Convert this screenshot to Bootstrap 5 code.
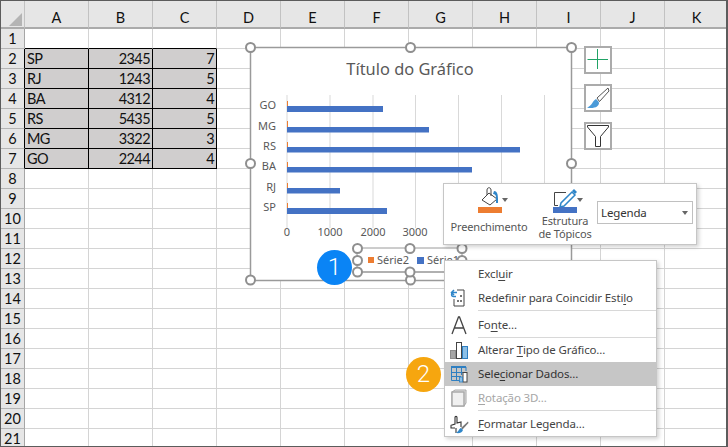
<!DOCTYPE html>
<html lang="pt-BR">
<head>
    <meta charset="UTF-8">
    <title>Selecionar Dados</title>
    <link href="https://cdn.jsdelivr.net/npm/bootstrap@5.3.0/dist/css/bootstrap.min.css" rel="stylesheet">
    <style>
        body { margin: 0; background: #fff; overflow: hidden; }
        .xl-window { position: relative; width: 728px; height: 447px; overflow: hidden; border: 1px solid #5c5c5c; border-right-width: 2px; box-sizing: border-box; }
        .xl-sheet { border-collapse: separate; border-spacing: 0; table-layout: fixed; width: 728px; font: 14.5px/19px Lato, "Liberation Sans", sans-serif; color: #111; }
        .xl-sheet td, .xl-sheet th { box-sizing: border-box; height: 20px; padding: 0 2px; border-right: 1px solid #d4d4d4; border-bottom: 1px solid #d4d4d4; font-weight: 400; overflow: hidden; white-space: nowrap; }
        .xl-sheet col.xl-rowcol { width: 24px; }
        .xl-sheet col.xl-datacol { width: 64px; }
        .xl-sheet thead th { height: 28px; padding: 6px 0 0; background: #e6e6e6; text-align: center; border-right-color: #c2c2c2; border-bottom: 2px solid #ababab; }
        .xl-sheet tbody th { padding: 0; background: #e6e6e6; text-align: center; border-right-color: #a6a6a6; border-bottom-color: #b5b5b5; }
        .xl-sheet td.xl-data { background: #d0cece; border-right-color: #000; border-bottom-color: #000; letter-spacing: -.6px; }
        .xl-sheet td.xl-above { border-bottom-color: #000; }
        .xl-sheet th.xl-beside { border-right-color: #000; }
        .xl-corner { position: absolute; left: 8px; top: 12px; width: 0; height: 0; border-left: 13px solid transparent; border-bottom: 13px solid #b4b4b4; }
        .xl-canvas { position: absolute; left: -1px; top: -1px; width: 728px; height: 447px; }
        .xl-canvas text { font-family: "Noto Sans", "Open Sans", sans-serif; fill: #595959; }
        .xl-sidebtn { position: absolute; left: 583px; width: 28px; height: 28px; padding: 0; background: #fff; border: 2px solid #ababab; border-radius: 0; }
        .xl-sidebtn svg { display: block; }
        .xl-float { position: absolute; background: #fff; border: 1px solid #c6c6c6; box-shadow: 2px 2px 4px rgba(0,0,0,.18); font-family: "Noto Sans", "Open Sans", sans-serif; color: #444; font-size: 11.5px; letter-spacing: -.13px; }
        .xl-mini { left: 442px; top: 182px; width: 254px; height: 62px; font-size: 11px; letter-spacing: -.15px; }
        .xl-minitool { line-height: 13px; text-align: center; color: #555; }
        .xl-combo { position: absolute; left: 153px; top: 17px; width: 96px; height: 23px; border: 1px solid #c0c0c0; padding: 3px 0 0 3px; line-height: 15px; color: #333; font-size: 11.5px; }
        .xl-combo::after { content: ""; position: absolute; right: 4px; top: 9px; border: 3.5px solid transparent; border-top: 4px solid #666; }
        .xl-menu { left: 443px; top: 259px; width: 213px; height: 177px; padding-top: 1px; }
        .xl-item { height: 24px; padding-right: 6px; }
        .xl-item.xl-active { background: #c6c6c6; color: #333; }
        .xl-item.xl-off { color: #a6a6a6; }
        .xl-item u { text-underline-offset: 2px; }
        .xl-icon { flex: 0 0 33px; display: flex; justify-content: center; padding-right: 6px; }
        .xl-sep { height: 2px; margin-left: 33px; position: relative; }
        .xl-sep-wide { height: 3px; }
        .xl-sep-thin { height: 1px; }
        .xl-sep::after { content: ""; position: absolute; left: 0; right: 0; top: 0; border-top: 1px solid #d8d8d8; }
        .xl-step { position: absolute; width: 35px; height: 35px; border-radius: 50%; color: #fff; font: 300 24px/35px Roboto, "Noto Sans", sans-serif; text-align: center; }
        .xl-step-1 { left: 316px; top: 249px; background: #0a84f5; }
        .xl-step-2 { left: 405px; top: 356px; background: #f6a60f; }
    </style>
</head>
<body>
<div class="xl-window">
    <table class="xl-sheet">
        <colgroup id="sheet-cols"></colgroup>
        <thead><tr id="sheet-head"></tr></thead>
        <tbody id="sheet-body"></tbody>
    </table>
    <div class="xl-corner"></div>

    <svg class="xl-canvas" viewBox="0 0 728 447">
        <rect x="250.5" y="47.5" width="321" height="233" fill="#fff" stroke="#9a9a9a" stroke-width="1.5"/>
        <text x="410" y="75" font-size="16.4" text-anchor="middle">Título do Gráfico</text>
        <g stroke="#d9d9d9" stroke-width="1">
            <path d="M287 95V228M330 95V228M373 95V228M415.5 95V228M458.5 95V228M501.5 95V228M544.5 95V228"/>
        </g>
        <g fill="#4472c4">
            <rect x="287" y="106" width="96" height="6"/>
            <rect x="287" y="127" width="142" height="5.500"/>
            <rect x="287" y="147" width="233" height="5.500"/>
            <rect x="287" y="167" width="185" height="5.500"/>
            <rect x="287" y="188" width="53" height="5.500"/>
            <rect x="287" y="208" width="100" height="6"/>
        </g>
        <g fill="#ed7d31">
            <rect x="287" y="101" width="1" height="5"/>
            <rect x="287" y="121" width="1" height="6"/>
            <rect x="287" y="142" width="1" height="5"/>
            <rect x="287" y="162" width="1" height="5"/>
            <rect x="287" y="183" width="1" height="5"/>
            <rect x="287" y="203" width="1" height="5"/>
        </g>
        <g font-size="11" text-anchor="end">
            <text x="276" y="109">GO</text>
            <text x="276" y="130">MG</text>
            <text x="276" y="150">RS</text>
            <text x="276" y="170">BA</text>
            <text x="276" y="191">RJ</text>
            <text x="276" y="211">SP</text>
        </g>
        <g font-size="11" text-anchor="middle">
            <text x="287" y="236">0</text>
            <text x="330" y="236">1000</text>
            <text x="373" y="236">2000</text>
            <text x="415" y="236">3000</text>
        </g>
        <path d="M357 248H462M462 248V272" stroke="#9a9a9a" fill="none"/>
        <path d="M357 272H462" stroke="#b0b0b0" stroke-width="2" fill="none"/>
        <path d="M357 248V272" stroke="#9a9a9a" fill="none"/>
        <rect x="368" y="257" width="6" height="6" fill="#ed7d31"/>
        <text x="377" y="264" font-size="11">Série2</text>
        <rect x="417" y="257" width="7" height="7" fill="#4472c4"/>
        <text x="427" y="264" font-size="11">Série1</text>
        <g fill="#fff" stroke="#8f8f8f" stroke-width="2">
            <circle cx="250.500" cy="47.500" r="4.500"/><circle cx="410.500" cy="47.500" r="4.500"/><circle cx="571.500" cy="47.500" r="4.500"/>
            <circle cx="250.500" cy="163.500" r="4.500"/><circle cx="571.500" cy="163.500" r="4.500"/>
            <circle cx="250.500" cy="280" r="4.500"/><circle cx="410.500" cy="280" r="4.500"/><circle cx="571.500" cy="280" r="4.500"/>
            <circle cx="357.500" cy="248.500" r="4.500"/><circle cx="410" cy="248.500" r="4.500"/><circle cx="462" cy="248.500" r="4.500"/>
            <circle cx="357.500" cy="260.500" r="4.500"/><circle cx="462" cy="260.500" r="4.500"/>
            <circle cx="357.500" cy="272" r="4.500"/><circle cx="410" cy="272" r="4.500"/><circle cx="462" cy="272" r="4.500"/>
        </g>
    </svg>

    <button type="button" class="btn xl-sidebtn" style="top:45px" aria-label="Elementos do gráfico">
        <svg width="24" height="24" viewBox="0 0 24 24"><path d="M11.500 1V21M1.500 11.500H22" stroke="#21a366" stroke-width="1" fill="none"/></svg>
    </button>
    <button type="button" class="btn xl-sidebtn" style="top:83px" aria-label="Estilos de gráfico">
        <svg width="24" height="24" viewBox="0 0 24 24"><path d="M22 2 11 12l2.500 3.500L23 5Z" fill="#fff" stroke="#555" stroke-width="1"/><path d="M10 13c-2 1-3 3-4 4.500S2.500 21 1 21.500c3 1 8 .5 10-1s2.500-3.500 1.500-5Z" fill="#4a9ad8"/></svg>
    </button>
    <button type="button" class="btn xl-sidebtn" style="top:121px" aria-label="Filtros de gráfico">
        <svg width="24" height="24" viewBox="0 0 24 24"><path d="M1.500 1.500H22.500V3L14.500 12.500V22.500H9.500V12.500L1.500 3Z" fill="#fff" stroke="#333" stroke-width="1"/></svg>
    </button>

    <div class="xl-float xl-mini">
        <div class="xl-minitool position-absolute d-flex flex-column align-items-center" style="left:3px;top:3px;width:84px">
            <svg width="40" height="31" viewBox="0 0 40 31"><path d="M13 13 20 6l8 6-7 6Z" fill="#fff" stroke="#444" stroke-width="1"/><path d="M18 8V3c0-3 4-3 4 0V9" fill="none" stroke="#444" stroke-width="1"/><path d="M25 4c3 0 4 3 4 8v4h-2v-5c0-3-1-4-3-4Z" fill="#2f86c9"/><path d="M33 11h6l-3 4Z" fill="#666"/><rect x="9" y="20" width="24" height="6" fill="#ed7d31"/></svg>
            <div style="margin-top:2px">Preenchimento</div>
        </div>
        <div class="xl-minitool position-absolute d-flex flex-column align-items-center" style="left:84px;top:3px;width:74px">
            <svg width="40" height="31" viewBox="0 0 40 31"><path d="M21 5.500H9.500V18.500H13" fill="none" stroke="#444" stroke-width="1"/><path d="M27 5l3 3L19 19l-4 1 1-4Z" fill="#fff" stroke="#2f86c9" stroke-width="1.500"/><path d="M27 4l2-2 3 3-2 2Z" fill="#2f86c9"/><path d="M32 11h6l-3 4Z" fill="#666"/><rect x="8" y="20" width="24" height="6" fill="#4472c4"/></svg>
            <div style="margin-top:-4px">Estrutura<br>de Tópicos</div>
        </div>
        <div class="xl-combo">Legenda</div>
    </div>

    <div class="xl-float xl-menu">
        <div class="xl-item d-flex align-items-center"><span class="xl-icon"></span><span>Excl<u>u</u>ir</span></div>
        <div class="xl-item d-flex align-items-center">
            <span class="xl-icon"><svg width="20" height="20" viewBox="0 0 20 20"><path d="M8 2H15V18H5V11" fill="#fff" stroke="#444" stroke-width="1"/><path d="M8 12h2v2H8ZM11 12h2v2h-2ZM11 7h2v2h-2Z" fill="#777"/><path d="M8 8H5.500C3 8 3 4 5.500 4H9M6 1.500 3.500 4 6 6.500" transform="translate(-1 .5)" fill="none" stroke="#2f86c9" stroke-width="1.500"/></svg></span>
            <span>Redefinir para Coincidir Esti<u>l</u>o</span>
        </div>
        <div class="xl-sep xl-sep-wide"></div>
        <div class="xl-item d-flex align-items-center">
            <span class="xl-icon"><svg width="20" height="20" viewBox="0 0 20 20"><path d="M3 19 9.500 2h1L17 19M5.500 13h9" fill="none" stroke="#444" stroke-width="1.300"/></svg></span>
            <span>Fo<u>n</u>te...</span>
        </div>
        <div class="xl-sep xl-sep-thin"></div>
        <div class="xl-item d-flex align-items-center">
            <span class="xl-icon"><svg width="20" height="20" viewBox="0 0 20 20"><rect x="1.500" y="10.500" width="5" height="8" fill="#a6a6a6" stroke="#8c8c8c"/><rect x="7.500" y="2.500" width="5" height="16" fill="#fff" stroke="#444"/><rect x="13.500" y="6.500" width="5" height="12" fill="#8cc0e8" stroke="#2f7fc1"/></svg></span>
            <span>Alterar <u>T</u>ipo de Gráfico...</span>
        </div>
        <div class="xl-item xl-active d-flex align-items-center">
            <span class="xl-icon"><svg width="20" height="20" viewBox="0 0 20 20"><path d="M2 3H17" stroke="#2f7fc1" stroke-width="2"/><path d="M2.500 3V16.500H12M7.500 3V16.500M12.500 3V11M17 3V7M2.500 8.500H17M2.500 12.500H12" stroke="#2f7fc1" fill="none"/><rect x="14" y="8.500" width="4" height="9.500" fill="#fff" stroke="#444"/><rect x="10.500" y="13" width="3" height="5" fill="#8cc0e8" stroke="#2f7fc1" stroke-width=".8"/></svg></span>
            <span>Sele<u>c</u>ionar Dados...</span>
        </div>
        <div class="xl-item xl-off d-flex align-items-center">
            <span class="xl-icon"><svg width="20" height="20" viewBox="0 0 20 20"><path d="M3 4 6 2H17V15L15 18H3Z" fill="#e4e4e4" stroke="#a6a6a6"/><rect x="3" y="4" width="12" height="14" fill="#f0f0f0" stroke="#a6a6a6" stroke-width="1.400"/></svg></span>
            <span><u>R</u>otação 3D...</span>
        </div>
        <div class="xl-sep"></div>
        <div class="xl-item d-flex align-items-center">
            <span class="xl-icon"><svg width="20" height="20" viewBox="0 0 20 20"><path d="M1.500 11.500 6 10V3.500c0-1.500 2-1.500 2 0V9l4-1 0 5M6 14H2v-2M7 14v5" fill="none" stroke="#333" stroke-width="1.100"/><path d="M19 7.500 12 14l1.500 1.500L19.500 9Z" fill="#777"/><path d="M12 14c-2 .5-2 3-5 5 3 .5 6 0 7-3Z" fill="#2f86c9"/></svg></span>
            <span><u>F</u>ormatar Legenda...</span>
        </div>
    </div>

    <div class="xl-step xl-step-1">1</div>
    <div class="xl-step xl-step-2">2</div>
</div>

<script src="https://cdn.jsdelivr.net/npm/bootstrap@5.3.0/dist/js/bootstrap.bundle.min.js"></script>
<script>
    const letters = "ABCDEFGHIJK".split("");
    const data = [["SP", 2345, 7], ["RJ", 1243, 5], ["BA", 4312, 4], ["RS", 5435, 5], ["MG", 3322, 3], ["GO", 2244, 4]];

    let cols = '<col class="xl-rowcol">';
    let head = "<th></th>";
    letters.forEach(l => {
        cols += '<col class="xl-datacol">';
        head += "<th>" + l + "</th>";
    });
    document.getElementById("sheet-cols").innerHTML = cols;
    document.getElementById("sheet-head").innerHTML = head;

    let body = "";
    for (let r = 1; r <= 21; r++) {
        const row = data[r - 2];
        body += "<tr><th" + (row ? ' class="xl-beside"' : "") + ">" + r + "</th>";
        letters.forEach((l, c) => {
            if (row && c < 3) {
                body += '<td class="xl-data' + (c ? " text-end" : "") + '">' + row[c] + "</td>";
            } else {
                body += "<td" + (r === 1 && c < 3 ? ' class="xl-above"' : "") + "></td>";
            }
        });
        body += "</tr>";
    }
    document.getElementById("sheet-body").innerHTML = body;
</script>
</body>
</html>
